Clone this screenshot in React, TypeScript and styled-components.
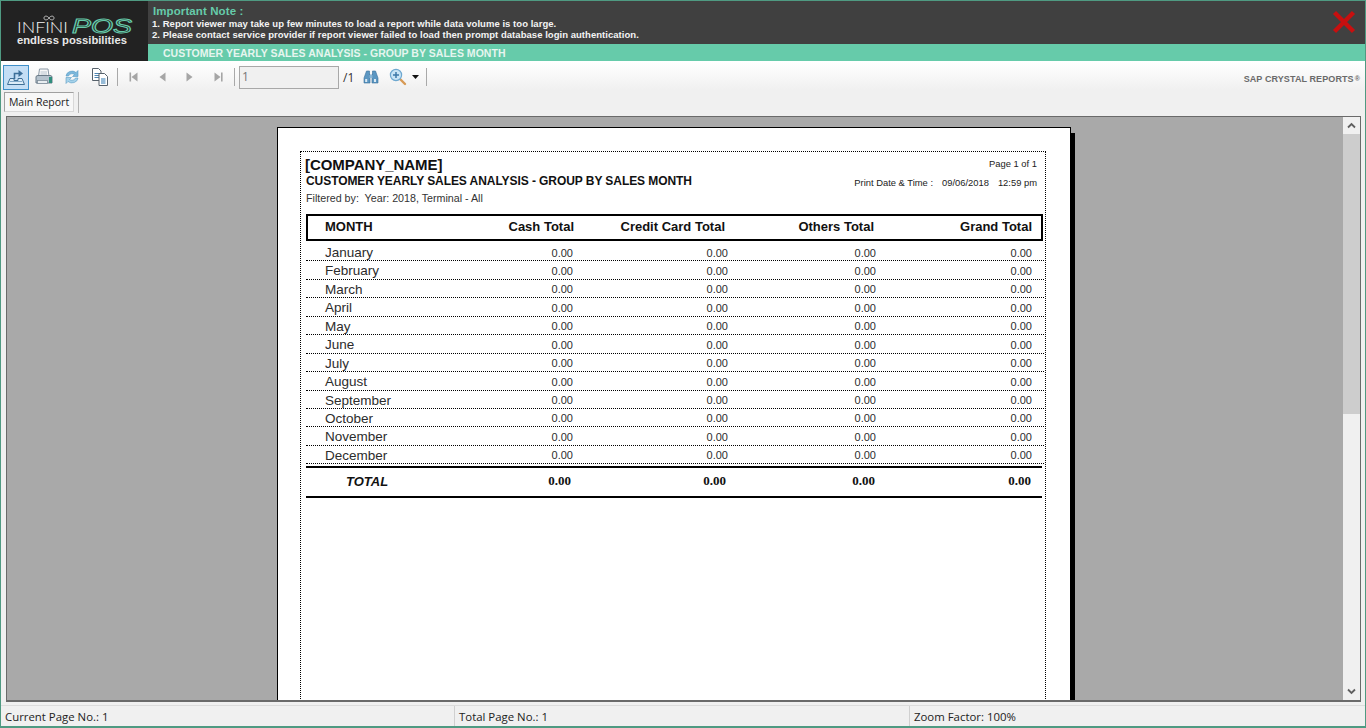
import React from 'react';
import styled, { createGlobalStyle } from 'styled-components';

const GlobalStyle = createGlobalStyle`
  html, body {
    margin: 0;
    padding: 0;
    background: #f0f0f0;
  }
  * {
    box-sizing: border-box;
  }
`;

const MONTHS = [
  'January',
  'February',
  'March',
  'April',
  'May',
  'June',
  'July',
  'August',
  'September',
  'October',
  'November',
  'December',
];

const Window = styled.div`
  width: 1366px;
  height: 728px;
  display: flex;
  flex-direction: column;
  overflow: hidden;
  border: 1px solid #4f9a82;
  border-bottom-width: 2px;
  background: #f0f0f0;
  font-family: 'Liberation Sans', Arial, sans-serif;
`;

/** Banner */
const Banner = styled.header`
  display: flex;
  height: 60px;
  flex: none;
`;

const LogoBox = styled.div`
  width: 147px;
  flex: none;
  background: #222222;
`;

const LogoArt = styled.svg`
  display: block;
  width: 147px;
  height: 60px;
`;

const LogoInfini = styled.text`
  font-family: 'Lato', sans-serif;
  font-weight: 300;
  font-size: 16.5px;
  fill: #f4f4f4;
`;

const LogoPos = styled.text`
  font-family: 'Liberation Sans', sans-serif;
  font-style: italic;
  font-size: 20px;
  fill: none;
  stroke: #66cbaa;
  stroke-width: 1;
`;

const LogoTag = styled.text`
  font-family: 'Liberation Sans', sans-serif;
  font-weight: bold;
  font-size: 11.5px;
  fill: #e8e8e8;
`;

const BannerMain = styled.div`
  flex: 1;
  display: flex;
  flex-direction: column;
`;

const NoteArea = styled.div`
  height: 43px;
  background: #404040;
  padding: 3px 10px 0 4px;
  position: relative;
`;

const NoteTitle = styled.div`
  font-weight: bold;
  font-size: 11.5px;
  line-height: 14px;
  letter-spacing: 0.1px;
  margin-left: 1px;
  color: #66cbaa;
`;

const NoteLine = styled.div`
  font-size: 9.5px;
  font-weight: bold;
  line-height: 11px;
  letter-spacing: 0.04px;
  color: #f4f4f4;
`;

const CloseIcon = styled.svg`
  position: absolute;
  right: 9px;
  top: 9px;
  width: 24px;
  height: 24px;
`;

const TitleBand = styled.div`
  height: 17px;
  background: #66cbaa;
  padding-left: 15px;
  font-weight: bold;
  font-size: 10.5px;
  line-height: 18px;
  letter-spacing: 0.03px;
  color: #e6f5ef;
`;

/** Toolbar */
const Toolbar = styled.div`
  height: 29px;
  flex: none;
  display: flex;
  align-items: center;
  padding: 2px 5px 0 2px;
  border-top: 1px solid #fff;
  background: linear-gradient(#ffffff, #f0f0f0);
`;

const ToolButton = styled.div<{ $active?: boolean; $width?: number }>`
  width: ${({ $width }) => $width ?? 28}px;
  height: 25px;
  flex: none;
  display: flex;
  align-items: center;
  justify-content: center;
  ${({ $active }) =>
    $active
      ? `
    width: 26px;
    margin-right: 1px;
    background: #c4def5;
    border: 1px solid #3f8fc9;
  `
      : ''}
`;

const ToolSeparator = styled.div<{ $left?: number; $right?: number }>`
  width: 1px;
  height: 18px;
  flex: none;
  background: #a9a9a9;
  margin-left: ${({ $left }) => $left ?? 3}px;
  margin-right: ${({ $right }) => $right ?? 2}px;
`;

const PageInput = styled.div`
  width: 100px;
  height: 23px;
  flex: none;
  margin-left: 2px;
  border: 1px solid #a8a8a8;
  background: #f0f0f0;
  color: #777;
  font-family: 'Open Sans', sans-serif;
  font-size: 12px;
  line-height: 20px;
  padding-left: 2px;
`;

const PageTotal = styled.span`
  margin-left: 4px;
  width: 15px;
  flex: none;
  font-family: 'Open Sans', sans-serif;
  font-size: 12px;
  color: #333;
`;

const Brand = styled.div`
  margin-left: auto;
  padding-top: 3px;
  font-weight: bold;
  font-size: 9px;
  letter-spacing: 0.1px;
  color: #6a6a6a;
  display: flex;
  align-items: flex-start;
`;

const BrandMark = styled.span`
  font-size: 7px;
  line-height: 9px;
  margin-left: 1px;
`;

/** Tabs */
const TabRow = styled.div`
  height: 26px;
  flex: none;
  display: flex;
  align-items: flex-start;
  padding: 2px 0 0 3px;
`;

const Tab = styled.div`
  width: 70px;
  height: 20px;
  border: 1px solid #a0a0a0;
  border-right-color: #d8d8d8;
  border-bottom-color: #d8d8d8;
  background: #f7f7f7;
  font-family: 'Open Sans', sans-serif;
  font-size: 10.5px;
  line-height: 18px;
  text-align: center;
  color: #1c1c1c;
`;

const TabEdge = styled.div`
  width: 1px;
  height: 21px;
  margin-left: 4px;
  background: #b4b4b4;
`;

/** Report viewer */
const Viewer = styled.main`
  height: 586px;
  flex: none;
  margin: 0 4px 0 5px;
  display: flex;
  border: 1px solid #6a6a6a;
  border-bottom-width: 2px;
  overflow: hidden;
`;

const Canvas = styled.div`
  flex: 1;
  background: #a9a9a9;
  padding: 10px 0 0 270px;
  overflow: hidden;
`;

const Page = styled.div`
  width: 794px;
  height: 1100px;
  background: #fff;
  border: 1px solid #000;
  box-shadow: 4px 6px 0 #000;
  padding: 23px 24px 0 22px;
`;

const ReportBox = styled.div`
  height: 1000px;
  border: 1px dotted #000;
  padding: 4px 0 0 4px;
  color: #111;
`;

const ReportHead = styled.div`
  display: flex;
  justify-content: space-between;
  height: 58px;
`;

const Company = styled.div`
  font-weight: bold;
  font-size: 15px;
  line-height: 18px;
  letter-spacing: -0.05px;
`;

const ReportTitle = styled.div`
  font-weight: bold;
  font-size: 12px;
  line-height: 14px;
  letter-spacing: -0.07px;
  margin-left: 1px;
`;

const Filter = styled.div`
  font-size: 10.7px;
  line-height: 14px;
  margin: 3px 0 0 1px;
  color: #333;
`;

const HeadRight = styled.div`
  text-align: right;
  padding: 2px 8px 0 0;
  font-size: 9.4px;
  color: #222;
`;

const PrintedAt = styled.div`
  margin-top: 8px;
  display: flex;
  justify-content: flex-end;
  gap: 9px;
`;

const ColumnHead = styled.div`
  width: 737px;
  height: 27px;
  margin-left: 1px;
  border: 2px solid #000;
  display: grid;
  grid-template-columns: 134px 115px 151px 149px 158px;
  padding: 0 0 2px 17px;
  align-items: center;
  font-weight: bold;
  font-size: 13px;
`;

const HeadLabel = styled.div<{ $first?: boolean }>`
  text-align: ${({ $first }) => ($first ? 'left' : 'right')};
`;

const Rows = styled.div`
  margin-top: 2px;
  margin-left: 1px;
  width: 738px;
`;

const Row = styled.div`
  height: 18.45px;
  border-bottom: 1px dotted #000;
  display: grid;
  grid-template-columns: 133px 115px 155px 148px 156px;
  padding-left: 19px;
  align-items: center;
  color: #2c2c2c;
`;

const MonthCell = styled.div`
  font-size: 13.5px;
  line-height: 18px;
  padding-top: 1px;
`;

const ValueCell = styled.div`
  font-size: 11px;
  text-align: right;
`;

const TotalRow = styled.div`
  width: 736px;
  height: 32px;
  margin: 2px 0 0 1px;
  border-top: 2px solid #000;
  border-bottom: 2px solid #000;
  display: grid;
  grid-template-columns: 110px 115px 155px 149px 156px;
  padding: 0 0 3px 40px;
  align-items: center;
  font-weight: bold;
  color: #111;
`;

const TotalLabel = styled.div`
  font-style: italic;
  font-size: 13px;
  padding-top: 1px;
`;

const TotalCell = styled.div`
  font-family: 'Liberation Serif', serif;
  font-size: 13px;
  text-align: right;
`;

/** Scrollbar */
const ScrollBar = styled.div`
  width: 17px;
  flex: none;
  background: #f0f0f0;
  display: flex;
  flex-direction: column;
`;

const ScrollArrow = styled.div`
  height: 17px;
  flex: none;
  display: flex;
  align-items: center;
  justify-content: center;
`;

const ScrollThumb = styled.div`
  height: 280px;
  flex: none;
  background: #cdcdcd;
`;

const ScrollTrack = styled.div`
  flex: 1;
`;

/** Status bar */
const StatusBar = styled.footer`
  flex: 1;
  margin-top: 3px;
  border-top: 1px solid #dcdcdc;
  display: grid;
  grid-template-columns: 454px 455px 1fr;
  font-family: 'Open Sans', sans-serif;
  font-size: 11.4px;
  color: #222;
`;

const StatusCell = styled.div<{ $last?: boolean }>`
  padding-left: 4px;
  line-height: 22px;
  border-right: ${({ $last }) => ($last ? 'none' : '1px solid #d0d0d0')};
`;

const Glyph = styled.svg`
  display: block;
  flex: none;
`;

const ExportIcon = () => (
  <Glyph width="20" height="20" viewBox="0 0 20 20">
    <path d="M1.5 17.5 L4 11.5 H8 V13.5 H12 V11.5 H16 L18.5 17.5 Z" fill="#dcecf8" stroke="#3f6f96" strokeWidth="1" />
    <path d="M4 14.5 H16" stroke="#7fa8c8" strokeWidth="1" />
    <path d="M8.5 12 V6.5 H13" fill="none" stroke="#3d6f99" strokeWidth="1.6" />
    <path d="M12.5 3 L17 6.5 L12.5 10 Z" fill="#3d6f99" />
  </Glyph>
);

const PrintIcon = () => (
  <Glyph width="20" height="20" viewBox="0 0 20 20">
    <path d="M5.5 2 H14 L15 9 H4.5 Z" fill="#f8f8f8" stroke="#8a98a5" strokeWidth="1" />
    <path d="M6.5 5 H13 M6.5 7 H13" stroke="#b8c4ce" strokeWidth="1" />
    <path d="M2 10 Q2 8.5 4 8.5 H16 Q18 8.5 18 10 V16 H2 Z" fill="#b5c2cd" stroke="#6b7b88" strokeWidth="1" />
    <rect x="3.5" y="13.5" width="10" height="3" fill="#e8edf1" stroke="#7e8d99" strokeWidth="0.8" />
    <rect x="15" y="10" width="3" height="6" fill="#2f8d7c" />
  </Glyph>
);

const RefreshIcon = () => (
  <Glyph width="18" height="18" viewBox="0 0 18 18">
    <path d="M3 8 A6 5.5 0 0 1 13 4.5 L15 2.5 V8.5 H9.5 L11.5 6.5 A3.8 3.5 0 0 0 5.5 8 Z" fill="#7db8dc" stroke="#5a9cc4" strokeWidth="0.6" />
    <path d="M15 10 A6 5.5 0 0 1 5 13.5 L3 15.5 V9.5 H8.5 L6.5 11.5 A3.8 3.5 0 0 0 12.5 10 Z" fill="#a4d2ea" stroke="#5a9cc4" strokeWidth="0.6" />
  </Glyph>
);

const CopyIcon = () => (
  <Glyph width="20" height="20" viewBox="0 0 20 20">
    <path d="M2.5 1.5 H8.5 L11 4 V13.5 H2.5 Z" fill="#fff" stroke="#56616b" strokeWidth="1" />
    <path d="M4.5 6.5 H9 M4.5 8.5 H9 M4.5 10.5 H9" stroke="#4f86b2" strokeWidth="1" />
    <path d="M9 6.5 H14.5 L17.5 9.5 V18.5 H9 Z" fill="#fff" stroke="#56616b" strokeWidth="1" />
    <path d="M11 12 H15.5 M11 14 H15.5 M11 16 H15.5" stroke="#2f78b0" strokeWidth="1" />
  </Glyph>
);

const NavIcon = ({ dir, bar }: { dir: 'left' | 'right'; bar?: boolean }) => (
  <Glyph width="12" height="12" viewBox="0 0 12 12">
    {dir === 'left' ? <path d="M9.5 1.5 V10.5 L3.5 6 Z" fill="#a6a6a6" /> : <path d="M2.5 1.5 V10.5 L8.5 6 Z" fill="#a6a6a6" />}
    {bar && <rect x={dir === 'left' ? 1.5 : 9} y="1.5" width="1.6" height="9" fill="#a6a6a6" />}
  </Glyph>
);

const BinocularsIcon = () => (
  <Glyph width="16" height="16" viewBox="0 0 16 16">
    <path d="M3.5 2 H6.5 V5 H7 V14 H1 V9 Z" fill="#5c97c2" stroke="#3a709c" strokeWidth="0.6" />
    <path d="M12.5 2 H9.5 V5 H9 V14 H15 V9 Z" fill="#5c97c2" stroke="#3a709c" strokeWidth="0.6" />
    <rect x="6.5" y="6" width="3" height="3" fill="#8bb7d6" />
    <rect x="2.2" y="10" width="2" height="3" fill="#dceaf4" />
    <rect x="11" y="10" width="2" height="3" fill="#dceaf4" />
  </Glyph>
);

const ZoomIcon = () => (
  <Glyph width="18" height="18" viewBox="0 0 18 18">
    <path d="M10.5 10.5 L16 16" stroke="#d79a55" strokeWidth="2.4" strokeLinecap="round" />
    <circle cx="7" cy="7" r="5.6" fill="#c8e4f6" stroke="#6ea8d0" strokeWidth="1.2" />
    <path d="M4 7 H10 M7 4 V10" stroke="#3d78a8" strokeWidth="1.5" />
  </Glyph>
);

const Caret = () => (
  <Glyph width="7" height="4" viewBox="0 0 7 4">
    <path d="M0 0 H7 L3.5 4 Z" fill="#111" />
  </Glyph>
);

const Chevron = ({ up }: { up?: boolean }) => (
  <Glyph width="9" height="7" viewBox="0 0 9 7">
    <path d={up ? 'M1 5.5 L4.5 2 L8 5.5' : 'M1 1.5 L4.5 5 L8 1.5'} fill="none" stroke="#606060" strokeWidth="1.8" />
  </Glyph>
);

export default function App() {
  return (
    <>
      <GlobalStyle />
      <Window>
        <Banner>
          <LogoBox>
            <LogoArt viewBox="0 0 147 60">
              <path d="M48 17 C46.5 14.5 43 14.5 43 17 C43 19.5 46.5 19.5 48 17 C49.5 14.5 53 14.5 53 17 C53 19.5 49.5 19.5 48 17 Z" fill="none" stroke="#dcdcdc" strokeWidth="0.8" />
              <LogoInfini x="16" y="31.5" textLength="51" lengthAdjust="spacingAndGlyphs">
                INFINI
              </LogoInfini>
              <LogoPos x="71" y="31.5" textLength="60" lengthAdjust="spacingAndGlyphs">
                POS
              </LogoPos>
              <LogoTag x="16" y="43" textLength="110" lengthAdjust="spacingAndGlyphs">
                endless possibilities
              </LogoTag>
            </LogoArt>
          </LogoBox>
          <BannerMain>
            <NoteArea>
              <NoteTitle>Important Note :</NoteTitle>
              <NoteLine>1. Report viewer may take up few minutes to load a report while data volume is too large.</NoteLine>
              <NoteLine>2. Please contact service provider if report viewer failed to load then prompt database login authentication.</NoteLine>
              <CloseIcon viewBox="0 0 24 24">
                <path d="M2.5 2.5 L21.5 21.5 M21.5 2.5 L2.5 21.5" stroke="#c80f0f" strokeWidth="4.4" />
              </CloseIcon>
            </NoteArea>
            <TitleBand>CUSTOMER YEARLY SALES ANALYSIS - GROUP BY SALES MONTH</TitleBand>
          </BannerMain>
        </Banner>

        <Toolbar>
          <ToolButton $active>
            <ExportIcon />
          </ToolButton>
          <ToolButton>
            <PrintIcon />
          </ToolButton>
          <ToolButton>
            <RefreshIcon />
          </ToolButton>
          <ToolButton>
            <CopyIcon />
          </ToolButton>
          <ToolSeparator />
          <ToolButton>
            <NavIcon dir="left" bar />
          </ToolButton>
          <ToolButton $width={27}>
            <NavIcon dir="left" />
          </ToolButton>
          <ToolButton $width={29}>
            <NavIcon dir="right" />
          </ToolButton>
          <ToolButton>
            <NavIcon dir="right" bar />
          </ToolButton>
          <ToolSeparator $left={2} />
          <PageInput>1</PageInput>
          <PageTotal>/1</PageTotal>
          <ToolButton $width={26}>
            <BinocularsIcon />
          </ToolButton>
          <ToolButton>
            <ZoomIcon />
          </ToolButton>
          <Caret />
          <ToolSeparator $left={7} />
          <Brand>
            SAP CRYSTAL REPORTS<BrandMark>®</BrandMark>
          </Brand>
        </Toolbar>

        <TabRow>
          <Tab>Main Report</Tab>
          <TabEdge />
        </TabRow>

        <Viewer>
          <Canvas>
            <Page>
              <ReportBox>
                <ReportHead>
                  <div>
                    <Company>[COMPANY_NAME]</Company>
                    <ReportTitle>CUSTOMER YEARLY SALES ANALYSIS - GROUP BY SALES MONTH</ReportTitle>
                    <Filter>Filtered by:&nbsp; Year: 2018, Terminal - All</Filter>
                  </div>
                  <HeadRight>
                    <div>Page 1 of 1</div>
                    <PrintedAt>
                      <span>Print Date &amp; Time :</span>
                      <span>09/06/2018</span>
                      <span>12:59 pm</span>
                    </PrintedAt>
                  </HeadRight>
                </ReportHead>
                <ColumnHead>
                  <HeadLabel $first>MONTH</HeadLabel>
                  <HeadLabel>Cash Total</HeadLabel>
                  <HeadLabel>Credit Card Total</HeadLabel>
                  <HeadLabel>Others Total</HeadLabel>
                  <HeadLabel>Grand Total</HeadLabel>
                </ColumnHead>
                <Rows>
                  {MONTHS.map((month) => (
                    <Row key={month}>
                      <MonthCell>{month}</MonthCell>
                      <ValueCell>0.00</ValueCell>
                      <ValueCell>0.00</ValueCell>
                      <ValueCell>0.00</ValueCell>
                      <ValueCell>0.00</ValueCell>
                    </Row>
                  ))}
                </Rows>
                <TotalRow>
                  <TotalLabel>TOTAL</TotalLabel>
                  <TotalCell>0.00</TotalCell>
                  <TotalCell>0.00</TotalCell>
                  <TotalCell>0.00</TotalCell>
                  <TotalCell>0.00</TotalCell>
                </TotalRow>
              </ReportBox>
            </Page>
          </Canvas>
          <ScrollBar>
            <ScrollArrow>
              <Chevron up />
            </ScrollArrow>
            <ScrollThumb />
            <ScrollTrack />
            <ScrollArrow>
              <Chevron />
            </ScrollArrow>
          </ScrollBar>
        </Viewer>

        <StatusBar>
          <StatusCell>Current Page No.: 1</StatusCell>
          <StatusCell>Total Page No.: 1</StatusCell>
          <StatusCell $last>Zoom Factor: 100%</StatusCell>
        </StatusBar>
      </Window>
    </>
  );
}
